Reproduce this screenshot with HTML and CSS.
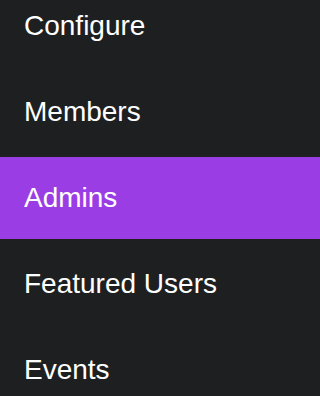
FILE: index.html
```html
<!DOCTYPE html>
<html>
<head>
<meta charset="utf-8">
<link rel="stylesheet" href="styles.css">
</head>
<body>
<nav class="menu">
  <a class="item">Configure</a>
  <a class="item">Members</a>
  <a class="item active">Admins</a>
  <a class="item">Featured Users</a>
  <a class="item">Events</a>
</nav>
</body>
</html>
```
FILE: styles.css
```css
html, body {
  margin: 0;
  padding: 0;
  background: #1e1f21;
  height: 100%;
  overflow: hidden;
}
.menu {
  display: flex;
  flex-direction: column;
  gap: 4px;
  margin-top: -15px;
  font-family: "Liberation Sans", Arial, sans-serif;
}
.item {
  display: block;
  padding: 25px 24px;
  font-size: 28px;
  line-height: 32px;
  color: #ffffff;
  white-space: nowrap;
}
.item.active {
  background: #9b3de4;
}
```
